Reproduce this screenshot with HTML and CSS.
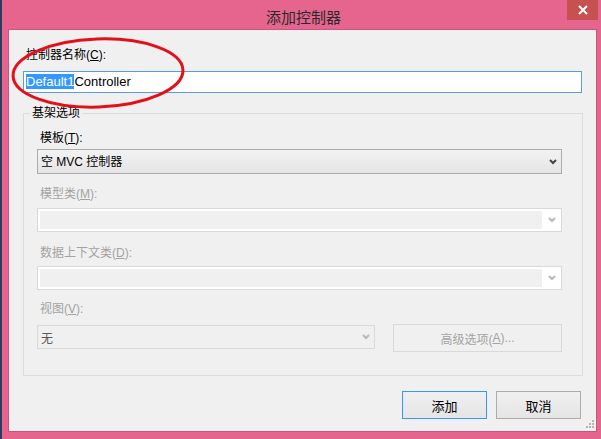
FILE: index.html
```html
<!DOCTYPE html>
<html lang="zh-CN">
<head>
<meta charset="utf-8">
<title>添加控制器</title>
<link rel="stylesheet" href="styles.css">
</head>
<body>
<div class="window">
  <div class="titlebar">
    <div class="title">添加控制器</div>
    <div class="close">
      <svg width="10" height="10" viewBox="0 0 10 10"><path d="M1 1 L9 9 M9 1 L1 9" stroke="#fff" stroke-width="2" fill="none"/></svg>
    </div>
  </div>
  <div class="client">
    <div class="lbl name-lbl">控制器名称(<u>C</u>):</div>
    <div class="name-input"><span class="sel">Default1</span>Controller</div>

    <fieldset class="group">
      <legend>基架选项</legend>

      <div class="lbl l1">模板(<u>T</u>):</div>
      <div class="combo">
        <span class="combo-text">空 MVC 控制器</span>
        <svg class="chev" width="8" height="6" viewBox="0 0 8 6"><path d="M1 1 L4 4 L7 1" stroke="#444" stroke-width="2" fill="none"/></svg>
      </div>

      <div class="lbl dis l2">模型类(<u>M</u>):</div>
      <div class="combo-dis">
        <div class="combo-inner"></div>
        <svg class="chev-dis" width="8" height="6" viewBox="0 0 8 6"><path d="M1 1 L4 4 L7 1" stroke="#B8B8B8" stroke-width="2" fill="none"/></svg>
      </div>

      <div class="lbl dis l3">数据上下文类(<u>D</u>):</div>
      <div class="combo-dis">
        <div class="combo-inner"></div>
        <svg class="chev-dis" width="8" height="6" viewBox="0 0 8 6"><path d="M1 1 L4 4 L7 1" stroke="#B8B8B8" stroke-width="2" fill="none"/></svg>
      </div>

      <div class="lbl dis l4">视图(<u>V</u>):</div>
      <div class="view-row">
        <div class="combo-view">
          <span class="view-text">无</span>
          <svg class="chev" width="8" height="6" viewBox="0 0 8 6"><path d="M1 1 L4 4 L7 1" stroke="#B8B8B8" stroke-width="2" fill="none"/></svg>
        </div>
        <div class="btn-adv">高级选项(<u>A</u>)...</div>
      </div>
    </fieldset>

    <div class="buttons">
      <div class="btn btn-default">添加</div>
      <div class="btn">取消</div>
    </div>

    <svg class="grip" width="10" height="10" viewBox="0 0 10 10" fill="#B4B4B4">
      <rect x="7" y="1" width="2" height="2"/>
      <rect x="4" y="4" width="2" height="2"/><rect x="7" y="4" width="2" height="2"/>
      <rect x="1" y="7" width="2" height="2"/><rect x="4" y="7" width="2" height="2"/><rect x="7" y="7" width="2" height="2"/>
    </svg>
  </div>

  <svg class="mark" width="200" height="120" viewBox="0 0 200 120">
    <ellipse cx="98" cy="73" rx="85" ry="34" transform="rotate(-2 98 73)" fill="none" stroke="#E3101B" stroke-width="3"/>
  </svg>
</div>
</body>
</html>
```

FILE: styles.css
```css
* { box-sizing: border-box; }

html, body {
  margin: 0;
  padding: 0;
  background: #2D3B5C;
}

body {
  width: 601px;
  height: 439px;
  overflow: hidden;
  font-family: "Liberation Sans", "Noto Sans CJK SC", sans-serif;
  font-size: 12px;
  color: #000;
}

.window {
  position: relative;
  width: 601px;
  height: 439px;
  background: #E6658F;
  border-left: 2px solid #2D3B5C;
  display: flex;
  flex-direction: column;
}

.titlebar {
  height: 29px;
  display: grid;
  grid-template-columns: 1fr auto 1fr;
}

.title {
  grid-column: 2;
  font-family: "Noto Sans CJK SC", sans-serif;
  font-size: 15px;
  line-height: 29px;
  padding-top: 2px;
  padding-left: 4px;
  color: #2A2A2A;
}

.close {
  grid-column: 3;
  justify-self: end;
  align-self: start;
  width: 31px;
  height: 20px;
  margin-right: 3px;
  background: #C75050;
  display: flex;
  align-items: center;
  justify-content: center;
}

.client {
  position: relative;
  margin-left: 6px;
  width: 589px;
  height: 403px;
  background: #F0F0F0;
  border: 1px solid #C8557E;
  padding: 17px 0 0 14px;
}

.lbl {
  height: 16px;
  line-height: 16px;
  padding-left: 3px;
  white-space: nowrap;
}

.lbl.dis { color: #A3A3A3; }

.name-lbl { margin-bottom: 8px; }

.name-input {
  width: 559px;
  height: 22px;
  border: 1px solid #5F9BD8;
  background: #fff;
  padding-left: 2px;
  font-family: "Liberation Sans", sans-serif;
  font-size: 13px;
  line-height: 20px;
  white-space: nowrap;
}

.sel {
  background: #3399FF;
  color: #fff;
}

.group {
  margin: 12px 0 0 0;
  width: 560px;
  border: 1px solid #DCDCDC;
  padding: 9px 20px 23px 13px;
  min-width: 0;
}

.group legend {
  padding: 0 2px;
  margin-left: -7px;
  line-height: 16px;
  height: 16px;
  font-size: 12px;
}

.l1 { margin-bottom: 3px; }
.l2 { margin-top: 12px; margin-bottom: 6px; }
.l3 { margin-top: 13px; margin-bottom: 5px; }
.l4 { margin-top: 11px; margin-bottom: 7px; }

.combo {
  width: 525px;
  height: 25px;
  border: 1px solid #ACACAC;
  background: linear-gradient(#F2F2F2, #E5E5E5);
  display: flex;
  align-items: center;
  justify-content: space-between;
  padding: 0 4px 0 3px;
}

.combo-text { line-height: 16px; }

.chev { display: block; }

.combo-dis {
  width: 525px;
  height: 24px;
  border: 1px solid #D9D9D9;
  background: #fff;
  padding: 2px;
  display: flex;
  align-items: center;
}

.combo-inner {
  width: 502px;
  height: 18px;
  background: #F0F0F0;
}

.chev-dis {
  display: block;
  margin-left: 6px;
}

.view-row {
  display: flex;
  align-items: flex-start;
  gap: 18px;
}

.combo-view {
  margin-top: 1px;
  width: 338px;
  height: 24px;
  border: 1px solid #D9D9D9;
  background: #F0F0F0;
  display: flex;
  align-items: center;
  justify-content: space-between;
  padding: 0 4px 0 3px;
}

.view-text { color: #5A5A5A; }

.btn-adv {
  width: 169px;
  height: 28px;
  border: 1px solid #D9D9D9;
  background: #F0F0F0;
  color: #A3A3A3;
  display: flex;
  align-items: center;
  justify-content: center;
}

.buttons {
  margin-top: 15px;
  padding-right: 15px;
  display: flex;
  justify-content: flex-end;
  gap: 9px;
}

.btn {
  width: 85px;
  height: 28px;
  border: 1px solid #ACACAC;
  background: linear-gradient(#F0F0F0, #E5E5E5);
  font-size: 13px;
  display: flex;
  align-items: center;
  justify-content: center;
}

.btn-default {
  border-color: #3399FF;
}

.grip {
  position: absolute;
  right: 1px;
  bottom: 2px;
}

.mark {
  position: absolute;
  left: -2px;
  top: 0;
  pointer-events: none;
}
```
